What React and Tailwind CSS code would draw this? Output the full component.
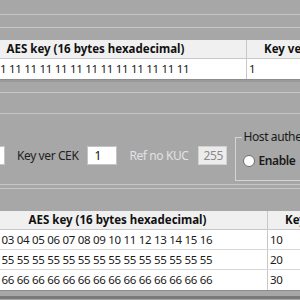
import React from 'react'

const font = { fontFamily: '"Noto Sans", "Open Sans", sans-serif' }

const hex = (s) => Array(16).fill(s).join(' ')

const topRows = [{ key: hex('11'), ver: '1' }]
const bottomRows = [
  { key: '01 02 03 04 05 06 07 08 09 10 11 12 13 14 15 16', ver: '10' },
  { key: hex('55'), ver: '20' },
  { key: hex('66'), ver: '30' },
]

function KeyTable({ rows, offset, keyWidth }) {
  return (
    <div className="bg-white border-b border-[#8c8c8c] overflow-hidden" style={{ marginLeft: offset, width: 300 - offset }}>
      <div className="flex h-[19px] bg-[#f0f0f0] border-b border-[#c8c8c8] text-[11.5px] font-bold text-[#111] whitespace-nowrap">
        <div className="shrink-0 border-r border-[#c8c8c8] flex items-center justify-center" style={{ width: keyWidth }}>
          AES key (16 bytes hexadecimal)
        </div>
        <div className="flex-1 flex items-center pl-[17px]">Key ver CEK</div>
      </div>
      {rows.map((r) => (
        <div key={r.ver} className="flex h-[20px] border-b border-[#d8d8d8] last:border-b-0 text-[11.5px] tracking-[-0.3px] text-[#1a1a1a] whitespace-nowrap">
          <div className="shrink-0 border-r border-[#c8c8c8] flex items-center pl-[3px]" style={{ width: keyWidth }}>
            {r.key}
          </div>
          <div className="flex-1 flex items-center pl-[2px]">{r.ver}</div>
        </div>
      ))}
    </div>
  )
}

export default function App() {
  return (
    <div className="w-[300px] h-[300px] overflow-hidden bg-[#a7a7a7] text-[11px] leading-none" style={font}>
      {/* top chrome */}
      <div className="h-[40px] flex flex-col">
        <div className="h-[14px]" />
        <div className="h-px bg-[#c6c6c6]" />
        <div className="h-[12px]" />
        <div className="h-px bg-[#c6c6c6]" />
      </div>

      <KeyTable rows={topRows} offset={-55} keyWidth={302} />

      {/* gap */}
      <div className="h-[34px] flex flex-col">
        <div className="h-[2px] bg-[#9a9a9a]" />
        <div className="h-[10px]" />
        <div className="h-px bg-[#c6c6c6]" />
        <div className="h-[20px]" />
        <div className="h-px bg-[#c6c6c6]" />
      </div>

      {/* settings row */}
      <div className="h-[70px] flex items-start whitespace-nowrap overflow-hidden text-[12px] tracking-[-0.4px]">
        <div className="mt-[32px] flex items-center shrink-0">
          <div className="w-[30px] h-[19px] -ml-[25px] bg-white border border-[#c4c4c4] shrink-0" />
          <span className="ml-[12px] text-[#222]">Key ver CEK</span>
          <div className="ml-[9px] w-[30px] h-[19px] bg-white border border-[#c4c4c4] flex items-center pl-[6px] text-[#111] shrink-0">1</div>
          <span className="ml-[12px] text-[#e2e2e2]">Ref no KUC</span>
          <div className="ml-[10px] w-[29px] h-[19px] bg-[#ececec] border border-[#d2d2d2] flex items-center pl-[4px] text-[#8a8a8a] shrink-0">255</div>
        </div>
        <fieldset className="ml-[8px] mt-[17px] h-[50px] w-[120px] shrink-0 border border-[#d4d4d4] border-r-0 pl-[7px]">
          <legend className="-ml-[1px] px-[1px] text-[#1a1a1a]">Host authentication</legend>
          <div className="flex items-center mt-[12px]">
            <span className="w-[12px] h-[12px] rounded-full bg-white border border-[#6f6f6f] shrink-0" />
            <span className="ml-[3px] font-semibold text-[#1a1a1a]">Enable</span>
          </div>
        </fieldset>
      </div>

      {/* divider */}
      <div className="h-[27px] flex flex-col">
        <div className="h-px bg-[#c6c6c6]" />
        <div className="h-[3px]" />
        <div className="h-px bg-[#c6c6c6]" />
      </div>

      <KeyTable rows={bottomRows} offset={-32} keyWidth={300} />

      <div className="h-[5px]" />
      <div className="h-[3px] bg-[#7a7a7a]" />
    </div>
  )
}
